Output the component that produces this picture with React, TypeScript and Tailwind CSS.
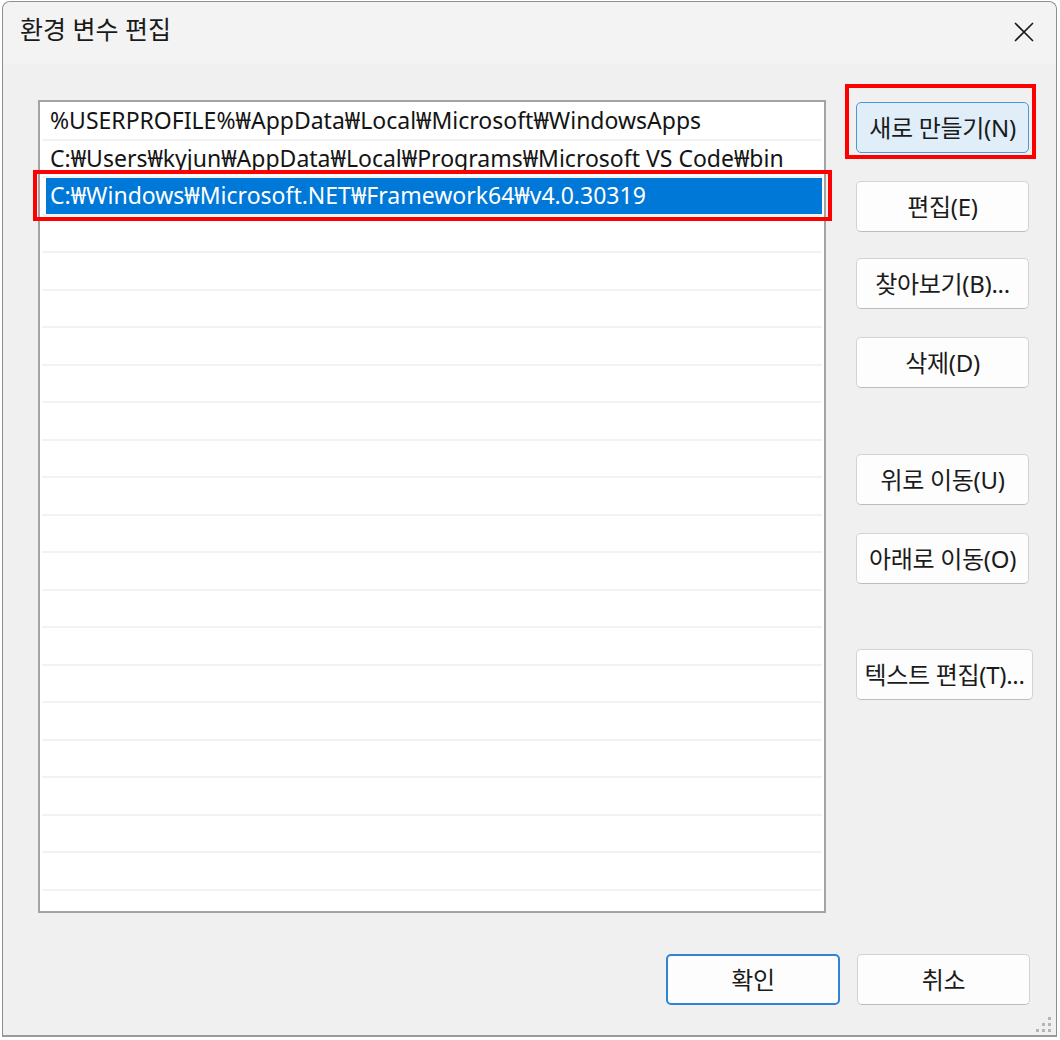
import React from "react";

const FONT = "font-['Noto_Sans','Noto_Sans_CJK_KR',sans-serif]";

const rows = [
  "%USERPROFILE%₩AppData₩Local₩Microsoft₩WindowsApps",
  "C:₩Users₩kyjun₩AppData₩Local₩Programs₩Microsoft VS Code₩bin",
  "C:₩Windows₩Microsoft.NET₩Framework64₩v4.0.30319",
];

function Btn({
  label,
  wide,
  className,
  variant,
}: {
  label: string;
  wide?: boolean;
  className?: string;
  variant?: "hover" | "default";
}) {
  const base =
    "h-[51px] flex items-center justify-center rounded-[5px] text-[24px] tracking-[-0.3px] text-[#1b1b1b] whitespace-nowrap ";
  const v =
    variant === "hover"
      ? "bg-[#e0eef9] border-[1.5px] border-[#4a98dc]"
      : variant === "default"
      ? "bg-[#fdfdfd] border-2 border-[#2f84d6]"
      : "bg-[#fdfdfd] border border-[#d3d3d3] border-b-[#bdbdbd]";
  return (
    <div className={base + v + " " + (wide ? "w-[177px]" : "w-[173px]") + " " + (className ?? "")}>
      {label}
    </div>
  );
}

export default function App() {
  const total = 22;
  return (
    <div className={"relative w-[1060px] h-[1040px] bg-white overflow-hidden " + FONT}>
      <div className="ml-[2px] mt-[1px] w-[1055px] h-[1036px] border border-[#8e8e8e] border-b-2 border-b-[#9a9a9a] rounded-t-[8px] bg-[#f0f0f0] flex flex-col relative">
        {/* Title bar */}
        <div className="h-[62px] bg-[#f3f3f3] rounded-t-[8px] flex items-start justify-between">
          <div className="pl-[17px] pt-[11px] text-[25px] leading-[32px] text-[#1a1a1a]">환경 변수 편집</div>
          <div className="pt-[20px] pr-[22px]">
            <svg width="20" height="20" viewBox="0 0 20 20">
              <path d="M1 1 L19 19 M19 1 L1 19" stroke="#1a1a1a" strokeWidth="1.6" fill="none" />
            </svg>
          </div>
        </div>

        {/* Main */}
        <div className="flex mt-[36px] pl-[35px]">
          <div className="w-[788px] h-[813px] border-2 border-[#a3a3a3] bg-white overflow-hidden pt-[1px]">
            {Array.from({ length: total }).map((_, i) => {
              const text = rows[i];
              const selected = i === 2;
              return (
                <div key={i} className="h-[37.5px] mx-[2px] border-b-2 border-[#f2f2f2] flex">
                  {selected ? (
                    <div className="ml-[4px] flex-1 bg-[#0078d7] text-white text-[23px] leading-[35px] pl-[4px] whitespace-nowrap">
                      {text}
                    </div>
                  ) : (
                    <div className="pl-[8px] text-[23px] leading-[35px] text-[#141414] whitespace-nowrap">
                      {text ?? ""}
                    </div>
                  )}
                </div>
              );
            })}
          </div>

          <div className="ml-[30px] mt-[2px] flex flex-col">
            <Btn label="새로 만들기(N)" variant="hover" />
            <Btn label="편집(E)" className="mt-[28px]" />
            <Btn label="찾아보기(B)..." className="mt-[26px]" />
            <Btn label="삭제(D)" className="mt-[28px]" />
            <Btn label="위로 이동(U)" className="mt-[66px]" />
            <Btn label="아래로 이동(O)" className="mt-[28px]" />
            <Btn label="텍스트 편집(T)..." wide className="mt-[65px]" />
          </div>
        </div>

        {/* Bottom */}
        <div className="flex justify-end gap-[17px] pr-[26px] mt-[41px]">
          <Btn label="확인" variant="default" className="w-[174px]" />
          <Btn label="취소" />
        </div>

        {/* resize grip */}
        <div className="absolute right-[2px] bottom-[1px]">
          <svg width="20" height="17" viewBox="0 0 20 17">
            <rect x="14" y="0" width="3" height="3" fill="#b5b5b5" />
            <rect x="8" y="6" width="3" height="3" fill="#b5b5b5" />
            <rect x="14" y="6" width="3" height="3" fill="#b5b5b5" />
            <rect x="2" y="12" width="3" height="3" fill="#b5b5b5" />
            <rect x="8" y="12" width="3" height="3" fill="#b5b5b5" />
            <rect x="14" y="12" width="3" height="3" fill="#b5b5b5" />
          </svg>
        </div>
      </div>

      {/* annotation boxes */}
      <div className="absolute left-[33px] top-[170px] w-[799px] h-[51px] border-4 border-[#ff0000]" />
      <div className="absolute left-[845px] top-[84px] w-[191px] h-[75px] border-4 border-[#ff0000]" />
    </div>
  );
}
